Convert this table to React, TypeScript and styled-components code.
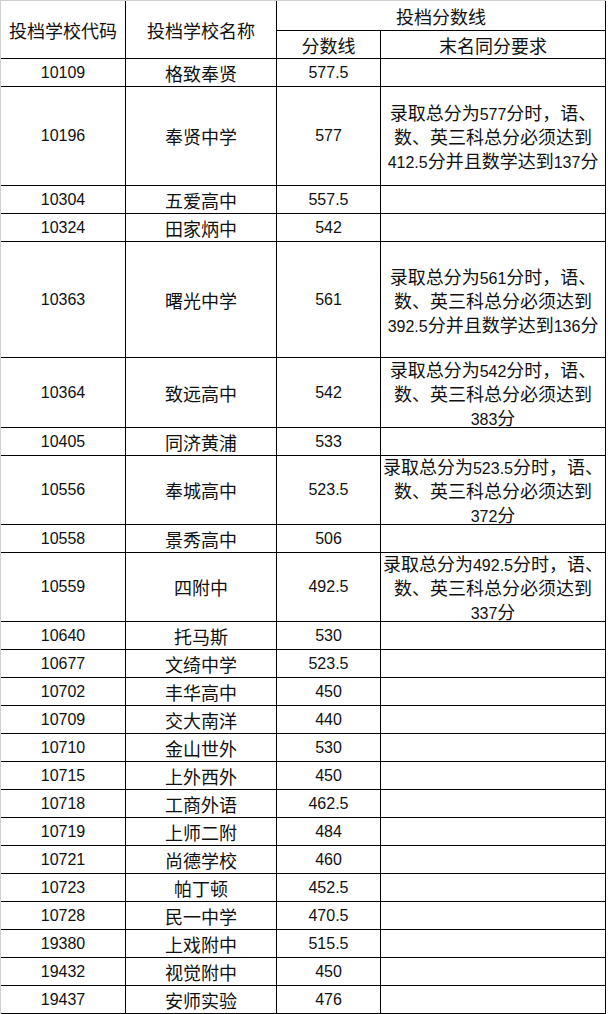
import { Fragment } from 'react'
import styled, { createGlobalStyle } from 'styled-components'

type Row = {
  code: string
  name: string
  score: string
  h: number
  note?: string[]
}

const rows: Row[] = [
  { code: '10109', name: '格致奉贤', score: '577.5', h: 28 },
  {
    code: '10196',
    name: '奉贤中学',
    score: '577',
    h: 99,
    note: ['录取总分为577分时，语、', '数、英三科总分必须达到', '412.5分并且数学达到137分'],
  },
  { code: '10304', name: '五爱高中', score: '557.5', h: 28 },
  { code: '10324', name: '田家炳中', score: '542', h: 28 },
  {
    code: '10363',
    name: '曙光中学',
    score: '561',
    h: 116,
    note: ['录取总分为561分时，语、', '数、英三科总分必须达到', '392.5分并且数学达到136分'],
  },
  {
    code: '10364',
    name: '致远高中',
    score: '542',
    h: 70,
    note: ['录取总分为542分时，语、', '数、英三科总分必须达到', '383分'],
  },
  { code: '10405', name: '同济黄浦', score: '533', h: 28 },
  {
    code: '10556',
    name: '奉城高中',
    score: '523.5',
    h: 69,
    note: ['录取总分为523.5分时，语、', '数、英三科总分必须达到', '372分'],
  },
  { code: '10558', name: '景秀高中', score: '506', h: 28 },
  {
    code: '10559',
    name: '四附中',
    score: '492.5',
    h: 69,
    note: ['录取总分为492.5分时，语、', '数、英三科总分必须达到', '337分'],
  },
  { code: '10640', name: '托马斯', score: '530', h: 28 },
  { code: '10677', name: '文绮中学', score: '523.5', h: 28 },
  { code: '10702', name: '丰华高中', score: '450', h: 28 },
  { code: '10709', name: '交大南洋', score: '440', h: 28 },
  { code: '10710', name: '金山世外', score: '530', h: 28 },
  { code: '10715', name: '上外西外', score: '450', h: 28 },
  { code: '10718', name: '工商外语', score: '462.5', h: 28 },
  { code: '10719', name: '上师二附', score: '484', h: 28 },
  { code: '10721', name: '尚德学校', score: '460', h: 28 },
  { code: '10723', name: '帕丁顿', score: '452.5', h: 28 },
  { code: '10728', name: '民一中学', score: '470.5', h: 28 },
  { code: '19380', name: '上戏附中', score: '515.5', h: 28 },
  { code: '19432', name: '视觉附中', score: '450', h: 28 },
  { code: '19437', name: '安师实验', score: '476', h: 28 },
]

// digits are set smaller than the CJK glyphs, as in the sheet
const Mixed = ({ text }: { text: string }) => (
  <>
    {text.split(/(\d+(?:\.\d+)?)/).map((part, i) =>
      /^\d/.test(part) ? <Num key={i}>{part}</Num> : <Fragment key={i}>{part}</Fragment>
    )}
  </>
)

const App = () => {
  return (
    <>
      <GlobalStyle />
      <Sheet>
        <Cell $rows={2}>投档学校代码</Cell>
        <Cell $rows={2}>投档学校名称</Cell>
        <Cell $cols={2} $h={30}>
          投档分数线
        </Cell>
        <Cell $h={28}>分数线</Cell>
        <Cell $h={28}>末名同分要求</Cell>

        {rows.map((r) => (
          <Fragment key={r.code}>
            <Cell $h={r.h}>
              <Num>{r.code}</Num>
            </Cell>
            <Cell $h={r.h}>{r.name}</Cell>
            <Cell $h={r.h}>
              <Num>{r.score}</Num>
            </Cell>
            <Cell $h={r.h}>
              {r.note && (
                <Note>
                  {r.note.map((line) => (
                    <NoteLine key={line}>
                      <Mixed text={line} />
                    </NoteLine>
                  ))}
                </Note>
              )}
            </Cell>
          </Fragment>
        ))}
      </Sheet>
    </>
  )
}

const GlobalStyle = createGlobalStyle`
  html, body {
    margin: 0;
    padding: 0;
    background: #ffffff;
  }
  body {
    font-family: "Noto Sans CJK SC", "Liberation Sans", sans-serif;
    color: #000000;
  }
`

const Sheet = styled.div`
  display: grid;
  grid-template-columns: 125px 151px 104px 225px;
  width: max-content;
  border-left: 1px solid #d0d0d0;
  border-top: 1px solid #d0d0d0;
`

const Cell = styled.div<{ $h?: number; $rows?: number; $cols?: number }>`
  box-sizing: border-box;
  display: flex;
  align-items: center;
  justify-content: center;
  ${({ $h }) => ($h ? `height: ${$h}px;` : '')}
  ${({ $rows }) => ($rows ? `grid-row: span ${$rows};` : '')}
  ${({ $cols }) => ($cols ? `grid-column: span ${$cols};` : '')}
  border-right: 1px solid #000000;
  border-bottom: 1px solid #000000;
  font-family: "Noto Sans CJK SC", sans-serif;
  font-size: 18px;
  line-height: 24px;
  color: #111111;
  white-space: nowrap;
  overflow: visible;
`

const Num = styled.span`
  font-family: "Liberation Sans", Arial, sans-serif;
  font-size: 16px;
`

const Note = styled.div`
  display: flex;
  flex-direction: column;
  align-items: center;
`

const NoteLine = styled.div`
  height: 24px;
  line-height: 24px;
  white-space: nowrap;
`

export default App
